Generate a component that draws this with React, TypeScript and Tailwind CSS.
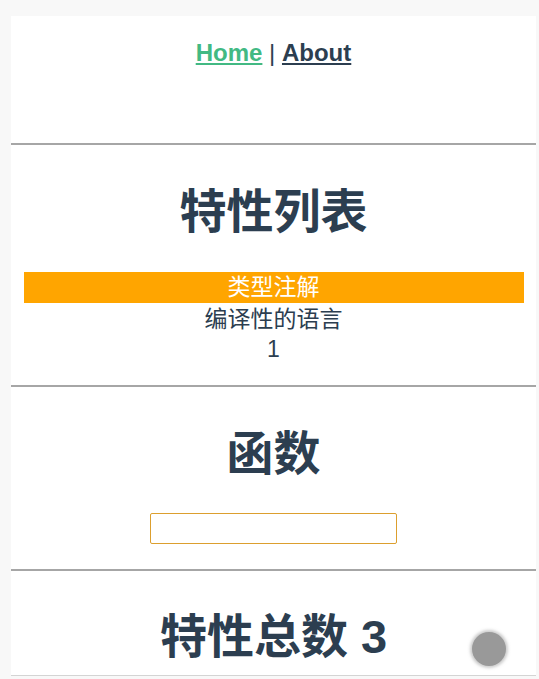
import React from "react";

export default function App() {
  const font = { fontFamily: '"Liberation Sans", "Noto Sans CJK SC", Arial, sans-serif' };
  return (
    <div className="min-h-screen bg-[#f8f8f8] pt-[16px] pl-[11px] pr-[3px] text-[#2c3e50]" style={font}>
      <div className="bg-white flex flex-col">
        <nav className="h-[127px] pt-[23px] text-center text-[24px] leading-[28px]">
          <a href="#" className="font-bold text-[#42b983] underline">Home</a>
          <span> | </span>
          <a href="#" className="font-bold text-[#2c3e50] underline">About</a>
        </nav>
        <div className="h-[2px] bg-[#a6a6a6]" />
        <section className="flex flex-col items-center pt-[43px] pb-[21px]">
          <h1 className="text-[47px] leading-[47px] font-bold">特性列表</h1>
          <div className="mt-[37px] w-[500px] h-[31px] bg-[#ffa500] text-white text-[23px] leading-[31px] text-center">类型注解</div>
          <div className="text-[23px] leading-[32px] text-center">编译性的语言</div>
          <div className="text-[23px] leading-[29px] text-center">1</div>
        </section>
        <div className="h-[2px] bg-[#a6a6a6]" />
        <section className="flex flex-col items-center pt-[43px] pb-[25px]">
          <h1 className="text-[47px] leading-[47px] font-bold">函数</h1>
          <input className="mt-[36px] w-[247px] h-[31px] border border-[#dc9f2e] rounded-[2px] outline-none" />
        </section>
        <div className="h-[2px] bg-[#a6a6a6]" />
        <section className="flex flex-col items-center pt-[42px] pb-[15px]">
          <h1 className="text-[47px] leading-[47px] font-bold">特性总数 3</h1>
        </section>
        <div className="h-px bg-[#d4d4d4]" />
      </div>
      <div className="fixed right-[33px] bottom-[13px] w-[34px] h-[34px] rounded-full bg-[#999999] shadow-[0_0_3px_2px_rgba(153,153,153,0.5)]" />
    </div>
  );
}
